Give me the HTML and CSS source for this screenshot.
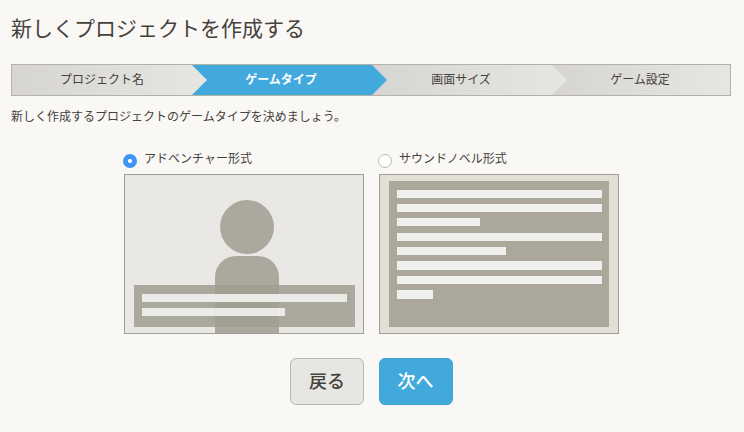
FILE: index.html
```html
<!DOCTYPE html>
<html lang="ja">
<head>
<meta charset="utf-8">
<title>新しくプロジェクトを作成する</title>
<link rel="stylesheet" href="styles.css">
</head>
<body>
<main class="page">
  <h1 class="title">新しくプロジェクトを作成する</h1>
  <ol class="steps">
    <li class="step step-1"><span>プロジェクト名</span></li>
    <li class="step step-2 active"><span>ゲームタイプ</span></li>
    <li class="step step-3"><span>画面サイズ</span></li>
    <li class="step step-4"><span>ゲーム設定</span></li>
  </ol>
  <p class="lead">新しく作成するプロジェクトのゲームタイプを決めましょう。</p>
  <div class="options">
    <div class="option">
      <div class="option-label">
        <span class="radio checked"></span>
        <span class="option-text">アドベンチャー形式</span>
      </div>
      <svg class="thumb" width="240" height="160" viewBox="0 0 240 160">
        <rect x="0.5" y="0.5" width="239" height="159" fill="#e9e8e4" stroke="#a09f93"/>
        <circle cx="123" cy="53" r="27" fill="#aba89e"/>
        <path d="M91 159V103a21 21 0 0 1 21-21h22a21 21 0 0 1 21 21v56z" fill="#aba89e"/>
        <rect x="10" y="111" width="221" height="42" fill="#a09d90" fill-opacity=".85"/>
        <rect x="18" y="120" width="205" height="8" fill="#f2f2f0" fill-opacity=".9"/>
        <rect x="18" y="134" width="143" height="8" fill="#f2f2f0" fill-opacity=".9"/>
      </svg>
    </div>
    <div class="option">
      <div class="option-label">
        <span class="radio"></span>
        <span class="option-text">サウンドノベル形式</span>
      </div>
      <svg class="thumb" width="240" height="160" viewBox="0 0 240 160">
        <rect x="0.5" y="0.5" width="239" height="159" fill="#e2dfd6" stroke="#a09f93"/>
        <rect x="10" y="7" width="220" height="146" fill="#aba89b"/>
        <g fill="#efefed">
          <rect x="18" y="16" width="205" height="8"/>
          <rect x="18" y="30" width="205" height="8"/>
          <rect x="18" y="44" width="83" height="8"/>
          <rect x="18" y="59" width="205" height="8"/>
          <rect x="18" y="73" width="109" height="8"/>
          <rect x="18" y="87" width="205" height="9"/>
          <rect x="18" y="102" width="205" height="8"/>
          <rect x="18" y="116" width="36" height="9"/>
        </g>
      </svg>
    </div>
  </div>
  <div class="actions">
    <button class="btn btn-back" type="button">戻る</button>
    <button class="btn btn-next" type="button">次へ</button>
  </div>
</main>
</body>
</html>
```
FILE: styles.css
```css
* { box-sizing: border-box; }
html, body { margin: 0; height: 100%; }
body {
  background: #faf8f5;
  color: #45413d;
  font-family: "Noto Sans CJK JP", "Noto Sans", sans-serif;
  overflow: hidden;
}
.page { padding: 12px 13px 0 11px; }
.title {
  margin: 0;
  font-size: 21px;
  line-height: 30px;
  font-weight: 400;
}
.steps {
  list-style: none;
  margin: 22px 0 0;
  padding: 0;
  height: 32px;
  display: flex;
  border: 1px solid #b3b1a8;
  background: #e3e3df;
}
.step {
  width: 195px;
  margin-right: -15px;
  display: flex;
  align-items: center;
  justify-content: center;
  font-size: 12px;
  line-height: 1;
  padding: 0 17px 2px 0;
  background: linear-gradient(90deg, #d6d5d1, #e6e6e2);
  clip-path: polygon(0 0, 180px 0, 100% 50%, 180px 100%, 0 100%);
  position: relative;
}
.step-1 { width: 195px; z-index: 4; padding-right: 15px; }
.step-2 { z-index: 3; }
.step-3 { z-index: 2; }
.step-4 { z-index: 1; flex: 1; margin-right: 0; padding-right: 2px; clip-path: none; }
.step.active {
  background: #41a9dc;
  color: #fff;
  font-weight: 700;
}
.lead {
  margin: 11px 0 0;
  font-size: 12px;
  line-height: 18px;
}
.options {
  display: flex;
  gap: 15px;
  margin: 28px 0 0 113px;
}
.option { width: 240px; display: flex; flex-direction: column; }
.option-label {
  height: 21px;
  display: flex;
  gap: 7px;
  font-size: 12px;
  line-height: 14px;
}
.option-text { margin-top: -2px; }
.radio {
  width: 14px;
  height: 14px;
  margin: 1px 0 0 -1px;
  border-radius: 50%;
  background: #fff;
  border: 1px solid #b8b8b4;
  flex: none;
}
.radio.checked {
  border: 0;
  background: radial-gradient(circle, #fff 0 1.6px, #3f95f5 2.4px);
}
.thumb { display: block; }
.actions {
  display: flex;
  justify-content: center;
  gap: 15px;
  margin: 24px 0 0;
}
.btn {
  width: 74px;
  height: 47px;
  border-radius: 6px;
  font: 500 18px/1 "Noto Sans CJK JP", sans-serif;
  padding: 0 0 4px;
}
.btn-back { background: #e6e6e2; border: 1px solid #b9b8ae; color: #45413d; padding-left: 1px; }
.btn-next { background: #41a9dc; border: 1px solid #3ea5d8; color: #fff; }
```
